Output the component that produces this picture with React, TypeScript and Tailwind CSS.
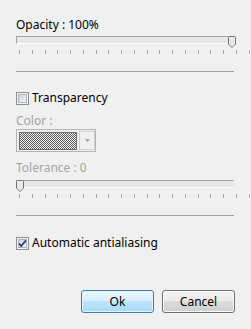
import React from "react";

const Thumb = () => (
  <svg width="8" height="12" viewBox="0 0 8 12" className="absolute top-[-1px]">
    <path d="M1.5 0.5 H6.5 Q7.5 0.5 7.5 1.5 V8 L4 11.5 L0.5 8 V1.5 Q0.5 0.5 1.5 0.5 Z" fill="#f4f4f4" stroke="#707070" strokeWidth="1" />
    <path d="M1.5 1.5 H6.5 V7.6 L4 10.2 L1.5 7.6 Z" fill="#e8e8e8" />
  </svg>
);

const Ticks = () => (
  <div className="ml-[3px] mr-[1px] mt-[6px] flex h-[4px] justify-between">
    {Array.from({ length: 19 }).map((_, i) => (
      <div key={i} className="h-[4px] w-px bg-[#a9a9a9]" />
    ))}
  </div>
);

const Track = ({ right }: { right: boolean }) => (
  <div className="relative h-[8px] w-[218px] border-l border-t border-[#a3a3a3] border-b border-b-white border-r border-r-[#e8e8e8] bg-[#e6e8e8]">
    <div className={right ? "absolute right-[-3px] top-0" : "absolute left-[-1px] top-0"}>
      <div className="relative h-[12px] w-[8px]">
        <Thumb />
      </div>
    </div>
  </div>
);

const CheckBox = ({ checked }: { checked: boolean }) => (
  <svg width="13" height="13" viewBox="0 0 13 13">
    <defs>
      <linearGradient id={checked ? "cbg1" : "cbg0"} x1="0" y1="0" x2="1" y2="1">
        <stop offset="0" stopColor="#cbcfd5" />
        <stop offset="1" stopColor="#f6f6f6" />
      </linearGradient>
    </defs>
    <rect x="0.5" y="0.5" width="12" height="12" fill="#f4f4f4" stroke="#8e8f8f" />
    <rect x="2.5" y="2.5" width="8" height="8" fill={`url(#${checked ? "cbg1" : "cbg0"})`} stroke="#b0b3b8" />
    {checked && (
      <path d="M3 6.5 L5.2 9 L10 3.2" fill="none" stroke="#2a3e8a" strokeWidth="1.8" />
    )}
  </svg>
);

export default function App() {
  return (
    <div
      className="h-[329px] w-[251px] bg-[#f0f0f0] pl-[16px] text-[12px] leading-[16px] text-black"
      style={{ fontFamily: '"Noto Sans", "Open Sans", sans-serif' }}
    >
      <div className="pt-[17px]">Opacity : 100%</div>
      <div className="mt-[3px]">
        <Track right />
      </div>
      <Ticks />
      <div className="mt-[17px] h-px w-[218px] bg-[#a0a0a0]" />

      <div className="mt-[18px] flex h-[16px] items-center gap-[3px]">
        <CheckBox checked={false} />
        <span>Transparency</span>
      </div>
      <div className="mt-[7px] text-[#a5a5a5]">Color :</div>
      <div className="mt-[0px] flex h-[23px] w-[80px] items-center border border-[#b5b5b5] bg-[#f0f0f0] pl-[2px]">
        <div className="h-[18px] w-[59px] border border-[#6d6d6d] bg-[repeating-conic-gradient(#5a5a5a_0_25%,#f4f4f4_0_50%)] bg-[length:2px_2px]" />
        <div className="ml-[2px] flex h-[19px] w-[16px] items-center justify-center border border-[#cfcfcf] bg-[#f0f0f0]">
          <svg width="5" height="3" viewBox="0 0 5 3">
            <path d="M0 0 H5 L2.5 3 Z" fill="#a0a0a0" />
          </svg>
        </div>
      </div>
      <div className="mt-[8px] text-[#a5a5a5]">Tolerance : 0</div>
      <div className="mt-[4px]">
        <Track right={false} />
      </div>
      <Ticks />
      <div className="mt-[17px] h-px w-[218px] bg-[#a0a0a0]" />

      <div className="mt-[19px] flex h-[16px] items-center gap-[3px]">
        <CheckBox checked />
        <span>Automatic antialiasing</span>
      </div>

      <div className="mt-[39px] flex gap-[8px] pl-[65px]">
        <button className="h-[23px] w-[73px] rounded-[3px] border border-[#3c7fb1] bg-[linear-gradient(#eaf6fd_0%,#d9f0fc_45%,#bee6fd_50%,#a7d9f5_100%)] text-[12px] leading-none shadow-[inset_0_0_0_1px_#e5f4fc]">
          Ok
        </button>
        <button className="h-[23px] w-[73px] rounded-[3px] border border-[#707070] bg-[linear-gradient(#f2f2f2_0%,#ebebeb_45%,#dddddd_50%,#cfcfcf_100%)] text-[12px] leading-none shadow-[inset_0_0_0_1px_#fcfcfc]">
          Cancel
        </button>
      </div>
    </div>
  );
}
